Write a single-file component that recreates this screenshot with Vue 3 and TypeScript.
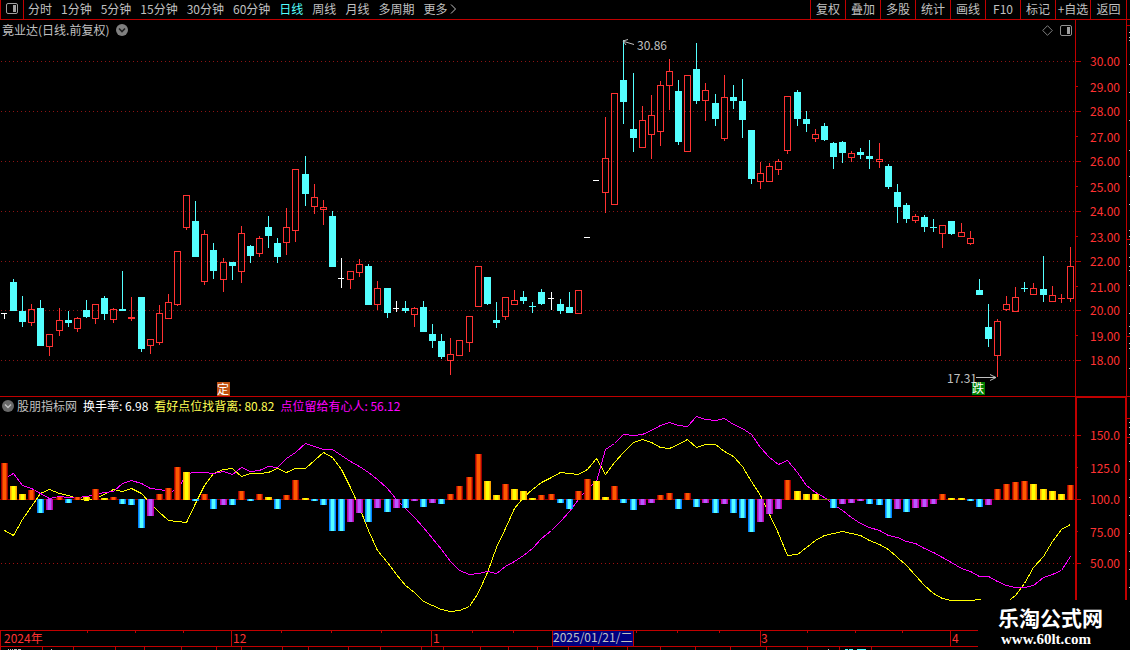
<script setup lang="ts">
import { computed, onBeforeUnmount, onMounted, ref } from 'vue'

type Tone = 'r' | 'c' | 'w'
type Candle = [Tone, number, number, number, number]

const periods = ['分时', '1分钟', '5分钟', '15分钟', '30分钟', '60分钟', '日线', '周线', '月线', '多周期']
const tools = ['复权', '叠加', '多股', '统计', '画线', 'F10', '标记', '+自选', '返回']
const activePeriod = ref('日线')

const plot = ref<HTMLElement | null>(null)
const width = ref(1075)
const measure = () => {
  if (plot.value) width.value = plot.value.clientWidth
}
onMounted(() => {
  measure()
  window.addEventListener('resize', measure)
})
onBeforeUnmount(() => window.removeEventListener('resize', measure))

// tone, high, body top, body bottom, low
const candles: Candle[] = [
  ['w', 313, 313, 314, 319], ['c', 279, 282, 311, 311], ['c', 296, 311, 322, 327], ['r', 304, 309, 323, 326],
  ['c', 300, 308, 346, 346], ['r', 334, 334, 347, 356], ['r', 308, 320, 331, 336], ['c', 311, 320, 323, 327],
  ['r', 317, 318, 329, 332], ['c', 300, 310, 317, 318], ['r', 304, 304, 319, 324], ['c', 296, 298, 314, 320],
  ['r', 308, 309, 320, 323], ['c', 271, 309, 311, 311], ['r', 297, 317, 319, 321], ['c', 297, 297, 349, 352],
  ['r', 339, 339, 346, 354], ['r', 305, 313, 343, 345], ['r', 294, 302, 319, 319], ['r', 251, 251, 305, 306],
  ['r', 195, 195, 228, 230], ['c', 201, 221, 257, 257], ['r', 230, 234, 282, 285], ['c', 243, 250, 271, 279],
  ['r', 258, 262, 280, 292], ['c', 262, 262, 266, 280], ['r', 226, 233, 272, 283], ['c', 245, 246, 256, 263],
  ['r', 236, 238, 254, 257], ['c', 216, 227, 236, 248], ['c', 238, 243, 257, 263], ['r', 208, 227, 243, 255],
  ['r', 169, 169, 231, 242], ['c', 156, 174, 194, 206], ['r', 184, 197, 207, 214], ['r', 200, 207, 210, 225],
  ['c', 211, 216, 267, 267], ['w', 258, 278, 279, 288], ['r', 271, 271, 280, 289], ['r', 259, 264, 273, 277],
  ['c', 264, 266, 305, 305], ['r', 281, 288, 305, 310], ['c', 288, 288, 313, 318], ['w', 301, 308, 309, 312],
  ['c', 301, 308, 311, 313], ['r', 307, 308, 315, 327], ['c', 301, 307, 332, 332], ['c', 324, 334, 341, 348],
  ['c', 334, 341, 357, 359], ['r', 338, 354, 361, 375], ['r', 340, 340, 356, 356], ['r', 316, 316, 343, 352],
  ['r', 266, 266, 307, 307], ['c', 277, 277, 304, 305], ['c', 302, 320, 323, 328], ['r', 297, 297, 317, 320],
  ['r', 290, 300, 305, 305], ['c', 291, 297, 301, 304], ['c', 302, 306, 307, 313], ['c', 289, 292, 304, 305],
  ['w', 292, 298, 299, 310], ['c', 299, 304, 311, 314], ['c', 292, 307, 313, 313], ['r', 290, 290, 314, 314],
  ['w', 237, 237, 238, 238], ['w', 180, 180, 181, 181], ['r', 117, 158, 193, 213], ['r', 93, 93, 205, 205],
  ['c', 40, 80, 102, 124], ['c', 73, 129, 138, 152], ['r', 106, 120, 148, 148], ['r', 95, 115, 135, 159],
  ['r', 81, 85, 132, 146], ['r', 59, 71, 86, 110], ['c', 80, 91, 142, 145], ['r', 75, 75, 152, 152],
  ['c', 43, 69, 101, 104], ['r', 83, 90, 101, 121], ['c', 94, 103, 119, 126], ['r', 75, 97, 139, 141],
  ['c', 85, 97, 101, 109], ['c', 79, 101, 120, 138], ['c', 130, 130, 179, 184], ['r', 162, 173, 182, 189],
  ['r', 163, 166, 182, 182], ['r', 159, 161, 170, 175], ['r', 96, 96, 151, 154], ['c', 90, 92, 119, 126],
  ['c', 111, 119, 124, 132], ['r', 129, 134, 139, 142], ['c', 123, 126, 140, 141], ['c', 142, 143, 157, 169],
  ['c', 141, 142, 153, 163], ['r', 151, 153, 158, 162], ['c', 148, 152, 155, 159], ['c', 140, 156, 159, 169],
  ['r', 143, 159, 162, 168], ['c', 164, 166, 187, 189], ['c', 184, 192, 207, 223], ['c', 203, 205, 219, 223],
  ['r', 214, 216, 221, 223], ['c', 215, 217, 227, 232], ['c', 219, 227, 228, 232], ['r', 225, 225, 234, 248],
  ['c', 221, 221, 234, 235], ['r', 223, 232, 237, 237], ['r', 231, 238, 244, 245], ['c', 279, 290, 295, 295],
  ['c', 304, 327, 339, 347], ['r', 319, 321, 356, 377], ['r', 296, 304, 310, 311], ['r', 287, 297, 312, 312],
  ['c', 282, 288, 289, 292], ['r', 283, 288, 295, 295], ['c', 256, 289, 295, 302], ['r', 286, 295, 302, 302],
  ['r', 294, 298, 299, 303], ['r', 247, 266, 299, 302],
]

// one letter per bar, ten bars per group
const barTones = [
  'oyyocmocoy', 'oyocccmooo', 'ycocmcocoy', 'cooyccccmm', 'cmcmcmcmco', 'oooyyoyyyo',
  'occooyyocc', 'mmoococmcm', 'cccmmmoyyy', 'ycmmmcccmc', 'mmmoyyccmo', 'oooyyyyo',
].join('')

const barEnds = [
  463, 486, 494, 490, 513, 510, 497, 503, 497, 497, 489, 498, 497, 504, 505, 528, 516, 494, 488, 467,
  472, 501, 494, 509, 505, 505, 491, 501, 494, 497, 509, 495, 480, 498, 501, 505, 531, 531, 522, 513,
  522, 508, 512, 508, 508, 501, 507, 503, 504, 494, 486, 477, 454, 481, 495, 484, 489, 491, 498, 495,
  494, 503, 509, 491, 479, 481, 497, 486, 503, 510, 505, 503, 495, 493, 509, 493, 507, 503, 513, 504,
  513, 518, 532, 522, 514, 509, 480, 491, 494, 494, 499, 508, 504, 503, 501, 504, 505, 518, 509, 512,
  508, 507, 504, 494, 498, 498, 501, 507, 505, 489, 484, 482, 481, 484, 489, 491, 494, 485,
]

const holders = [
  478, 473, 485, 488, 493, 498, 496, 497, 497, 496, 494, 492, 491, 483, 480, 483, 488, 489, 491, 490,
  473, 472, 472, 473, 471, 474, 467, 471, 470, 466, 467, 458, 452, 443, 446, 449, 449, 455, 461, 466,
  472, 479, 488, 499, 508, 517, 527, 538, 549, 561, 570, 574, 573, 571, 573, 566, 561, 555, 548, 538,
  530, 521, 511, 499, 488, 481, 449, 443, 434, 435, 434, 430, 425, 422, 425, 426, 416, 419, 420, 418,
  424, 428, 434, 447, 457, 464, 460, 472, 485, 492, 497, 504, 510, 517, 523, 527, 530, 535, 537, 541,
  543, 548, 552, 557, 562, 568, 571, 576, 576, 581, 585, 587, 587, 585, 577, 574, 570, 556,
]

const divergence = [
  530, 535, 519, 506, 493, 489, 493, 495, 498, 500, 498, 494, 489, 491, 488, 493, 503, 512, 520, 521,
  522, 503, 485, 473, 469, 468, 476, 473, 473, 472, 468, 472, 468, 468, 460, 452, 457, 469, 487, 507,
  530, 550, 562, 574, 585, 592, 601, 605, 609, 611, 610, 606, 592, 572, 547, 528, 508, 497, 489, 482,
  477, 472, 473, 474, 469, 458, 474, 462, 452, 442, 439, 442, 447, 448, 444, 439, 447, 444, 444, 451,
  456, 466, 481, 495, 514, 533, 555, 554, 547, 540, 535, 533, 531, 533, 535, 540, 544, 549, 557, 565,
  575, 585, 593, 598, 600, 600, 600, 599, 603, 604, 602, 595, 583, 567, 556, 541, 529, 524,
]

const palette: Record<Tone, string> = { r: '#ff3232', c: '#54ffff', w: '#ffffff' }
const step = computed(() => (width.value - 9) / (candles.length - 1))
const cx = (i: number) => Math.floor(4.4 + i * step.value)

const bars = computed(() =>
  barEnds
    .map((end, i) => {
      const down = end > 499
      return { x: cx(i) - 3, y: down ? 499 : end, h: down ? end - 499 : 500 - end, tone: barTones[i], flat: end === 499 }
    })
    .filter((b) => !b.flat),
)
const line = (values: number[]) => values.map((y, i) => `${cx(i) + 0.5},${y + 0.5}`).join(' ')

const priceGrid = [61, 111, 161, 211, 261, 310, 360]
const priceLabels = [62, 88, 112, 138, 162, 188, 212, 238, 262, 288, 311, 337, 361].map((y, i) => ({
  y,
  text: (30 - i).toFixed(2),
}))
const priceMinor = [86, 136, 186, 236, 286, 335]
const subLabels = [
  { y: 436, text: '150.0' },
  { y: 469, text: '125.0' },
  { y: 500, text: '100.0' },
  { y: 533, text: '75.00' },
  { y: 564, text: '50.00' },
]
const at = (x: number) => Math.round((x * width.value) / 1075)
const monthLines = [231, 431, 760, 950]
const weekTicks = [87, 135, 183, 281, 331, 381, 472, 513, 636, 677, 719, 807, 855, 902]
const footTicks = [
  0, 42, 73, 115, 144, 181, 216, 241, 282, 308, 348, 380, 421, 443, 480, 508, 537, 568, 593, 627, 660, 695, 730,
  766, 807, 839, 871,
]
const footMarks = [
  [8, 1], [10, 1], [12, 1], [14, 3], [18, 3], [51, 1], [828, 1],
]
const edgeMarks = [32, 37, 40, 64, 92, 120, 150, 176, 204, 230, 236, 244, 257, 266, 270, 285, 313, 326, 333, 343, 348, 368]
const subEdgeMarks = [422, 427, 434, 443, 461, 479, 497, 515, 533, 551, 569, 587]
</script>

<template>
  <main class="terminal">
    <header class="topbar">
      <button class="layout-btn" aria-label="布局">
        <svg width="12" height="11" viewBox="0 0 12 11">
          <rect x="0.5" y="0.5" width="11" height="10" rx="1.5" fill="none" stroke="#a0a0a0" />
          <rect x="7" y="2" width="3" height="7" fill="#a0a0a0" />
        </svg>
      </button>
      <nav class="periods">
        <button
          v-for="p in periods"
          :key="p"
          :class="{ active: p === activePeriod }"
          @click="activePeriod = p"
        >{{ p }}</button>
        <button class="more">
          更多<svg width="7" height="10" viewBox="0 0 7 10"><path d="M1 0.5L5.5 5L1 9.5" fill="none" stroke="#c0c0c0" /></svg>
        </button>
      </nav>
      <div class="tools">
        <button v-for="t in tools" :key="t">{{ t }}</button>
      </div>
    </header>

    <section class="panel main-panel">
      <div ref="plot" class="plot">
        <div class="title-row">
          <h1>竟业达(日线.前复权)</h1>
          <button class="round" aria-label="展开">
            <svg width="12" height="12" viewBox="0 0 12 12">
              <circle cx="6" cy="6" r="6" fill="#808080" />
              <path d="M3 4.5L6 7.5L9 4.5" fill="none" stroke="#202020" stroke-width="1.6" />
            </svg>
          </button>
          <span class="grow"></span>
          <svg width="11" height="11" viewBox="0 0 11 11">
            <path d="M5.5 0.7L10.3 5.5L5.5 10.3L0.7 5.5Z" fill="none" stroke="#808080" />
          </svg>
          <svg width="12" height="11" viewBox="0 0 12 11">
            <rect x="0.5" y="0.5" width="11" height="10" rx="1.5" fill="none" stroke="#909090" />
            <rect x="7" y="2" width="3" height="7" fill="#a0a0a0" />
          </svg>
        </div>
        <svg class="canvas" :width="width" height="356" :viewBox="`0 40 ${width} 356`">
          <g shape-rendering="crispEdges">
            <line
              v-for="y in priceGrid"
              :key="y"
              x1="1"
              :x2="width"
              :y1="y + 0.5"
              :y2="y + 0.5"
              stroke="#8c1414"
              stroke-dasharray="1 3"
            />
            <g v-for="(k, i) in candles" :key="i" :fill="palette[k[0]]">
              <rect :x="cx(i)" :y="k[1]" width="1" :height="k[2] - k[1]" />
              <rect :x="cx(i)" :y="k[3]" width="1" :height="k[4] - k[3]" />
              <rect
                v-if="k[0] === 'r' && k[3] - k[2] > 1"
                :x="cx(i) - 2.5"
                :y="k[2] + 0.5"
                width="6"
                :height="k[3] - k[2] - 1"
                fill="none"
                :stroke="palette.r"
              />
              <rect v-else :x="cx(i) - 3" :y="k[2]" :width="k[0] === 'w' ? 6 : 7" :height="k[3] - k[2]" />
            </g>
            <rect :x="cx(24) - 6" y="382" width="13" height="14" fill="#c05010" />
            <rect :x="cx(107) - 7" y="382" width="13" height="13" fill="#008000" />
          </g>
          <g fill="none" stroke="#c0c0c0">
            <path :d="`M${cx(68) + 11} 44.5L${cx(68) + 1} 41.5M${cx(68) + 5} 39.5L${cx(68)} 41L${cx(68) + 3} 45`" />
            <path :d="`M${cx(109) - 21} 377.5H${cx(109) - 1}M${cx(109) - 7} 374.5L${cx(109) - 1} 377.5L${cx(109) - 7} 380.5`" />
          </g>
          <text class="note" :x="cx(68) + 14" y="50">30.86</text>
          <text class="note" :x="cx(109) - 50" y="383">17.31</text>
          <text class="badge" :x="cx(24) - 6" y="394">定</text>
          <text class="badge" :x="cx(107) - 7" y="393">跌</text>
        </svg>
      </div>
      <svg class="axis" width="55" height="376" viewBox="0 20 55 376">
        <g shape-rendering="crispEdges" fill="#c00000">
          <rect x="0" y="20" width="1" height="376" />
          <rect x="51" y="20" width="1" height="376" />
          <rect v-for="y in priceGrid" :key="y" x="0" :y="y" width="6" height="1" />
          <rect v-for="y in priceMinor" :key="y" x="0" :y="y" width="3" height="1" />
          <rect v-for="y in [25, 239, 336]" :key="y" x="51" :y="y" width="4" height="1" />
          <rect v-for="y in edgeMarks" :key="y" x="54" :y="y" width="1" height="1" fill="#c0c0c0" />
        </g>
        <text v-for="l in priceLabels" :key="l.y" x="15" :y="l.y + 4">{{ l.text }}</text>
      </svg>
    </section>

    <section class="panel sub-panel">
      <div class="plot">
        <div class="legend">
          <button class="round" aria-label="指标菜单">
            <svg width="12" height="12" viewBox="0 0 12 12">
              <circle cx="6" cy="6" r="6" fill="#686868" />
              <path d="M3 4.5L6 7.5L9 4.5" fill="none" stroke="#c0c0c0" stroke-width="1.4" />
            </svg>
          </button>
          <span class="source">股朋指标网</span>
          <span class="turnover">换手率: 6.98</span>
          <span class="diverge">看好点位找背离: 80.82</span>
          <span class="holder">点位留给有心人: 56.12</span>
        </div>
        <svg class="canvas" :width="width" height="216" :viewBox="`0 414 ${width} 216`" shape-rendering="crispEdges">
          <defs>
            <linearGradient v-for="g in [
              { id: 'o', a: '#a00000', b: '#d83000', c: '#ff5800' },
              { id: 'y', a: '#ffa800', b: '#ffd000', c: '#ffff00' },
              { id: 'c', a: '#0080ff', b: '#28b8ff', c: '#54ffff' },
              { id: 'm', a: '#c000a8', b: '#b828d0', c: '#b858ff' },
            ]" :id="`tone-${g.id}`" :key="g.id">
              <stop offset="14%" :stop-color="g.a" />
              <stop offset="14%" :stop-color="g.b" />
              <stop offset="29%" :stop-color="g.b" />
              <stop offset="29%" :stop-color="g.c" />
              <stop offset="71%" :stop-color="g.c" />
              <stop offset="71%" :stop-color="g.b" />
              <stop offset="86%" :stop-color="g.b" />
              <stop offset="86%" :stop-color="g.a" />
            </linearGradient>
          </defs>
          <line
            v-for="y in [435, 563]"
            :key="y"
            x1="1"
            :x2="width"
            :y1="y + 0.5"
            :y2="y + 0.5"
            stroke="#a01010"
            stroke-dasharray="1 3"
          />
          <rect x="0" y="499" :width="width" height="1" fill="#900000" />
          <polyline :points="line(divergence)" fill="none" stroke="#ffff00" />
          <polyline :points="line(holders)" fill="none" stroke="#ff00ff" />
          <rect :x="cx(90) - 9" y="499" width="19" height="1" fill="#808000" />
          <rect
            v-for="b in bars"
            :key="b.x"
            :x="b.x"
            :y="b.y"
            width="7"
            :height="b.h"
            :fill="`url(#tone-${b.tone})`"
          />
        </svg>
      </div>
      <svg class="axis" width="55" height="233" viewBox="0 397 55 233">
        <g shape-rendering="crispEdges" fill="#c00000">
          <rect x="0" y="397" width="2" height="233" />
          <rect x="50" y="397" width="2" height="233" />
          <rect x="0" y="397" width="52" height="1" />
          <rect v-for="y in [435, 499, 563]" :key="y" x="0" :y="y" width="6" height="1" />
          <rect v-for="y in [467, 531]" :key="y" x="0" :y="y" width="3" height="1" />
          <rect v-for="y in [418, 437]" :key="y" x="51" :y="y" width="4" height="1" />
          <rect v-for="y in subEdgeMarks" :key="y" x="54" :y="y" width="1" height="1" fill="#c0c0c0" />
        </g>
        <text v-for="l in subLabels" :key="l.y" x="15" :y="l.y + 4">{{ l.text }}</text>
      </svg>
    </section>

    <footer class="timeline">
      <svg width="100%" height="20">
        <g shape-rendering="crispEdges" fill="#c00000">
          <rect width="100%" height="1" />
          <rect y="16" width="100%" height="1" />
          <rect width="1" height="16" />
          <rect v-for="x in monthLines" :key="x" :x="at(x)" width="1" height="16" />
          <rect v-for="x in weekTicks" :key="x" :x="at(x)" y="1" width="1" height="2" />
          <rect v-for="x in footTicks" :key="x" :x="at(x)" y="17" width="1" height="3" />
          <rect v-for="m in footMarks" :key="m[0]" :x="at(m[0])" y="19" :width="m[1]" height="1" fill="#c0c0c0" />
          <rect :x="at(845)" y="19" width="3" height="1" fill="#54ffff" />
          <rect :x="at(849)" y="19" width="4" height="1" fill="#54ffff" />
          <rect :x="at(857)" y="19" width="9" height="1" fill="#54ffff" />
          <rect :x="at(552)" y="1" width="82" height="15" fill="#c00000" />
          <rect :x="at(552) + 1" y="1" width="80" height="15" fill="#000080" />
        </g>
        <text :x="at(4)" y="13">2024年</text>
        <text :x="at(233)" y="13">12</text>
        <text :x="at(433)" y="13">1</text>
        <text class="cursor-date" :x="at(553)" y="12">2025/01/21/二</text>
        <text :x="at(761)" y="13">3</text>
        <text :x="at(952)" y="13">4</text>
      </svg>
    </footer>

    <aside class="brand">
      <strong>乐淘公式网</strong>
      <a href="#">www.60lt.com</a>
    </aside>
  </main>
</template>

<style>
html,
body {
  background: #000;
}
</style>

<style scoped>
.terminal {
  position: relative;
  overflow: hidden;
  background: #000;
  color: #c0c0c0;
  font: 12px/16px 'Noto Sans CJK SC', sans-serif;
}
button {
  padding: 0;
  border: 0;
  background: none;
  color: inherit;
  font: inherit;
  white-space: nowrap;
  cursor: pointer;
}
svg {
  display: block;
  flex: none;
}
.topbar {
  display: flex;
  height: 19px;
  border-bottom: 1px solid #c00000;
}
.topbar button {
  padding-bottom: 2px;
}
.layout-btn {
  display: flex;
  align-items: center;
  justify-content: center;
  width: 24px;
  border: solid #c00000;
  border-width: 0 1px;
}
.periods {
  display: flex;
  flex: 1;
  gap: 9px;
  padding-left: 4px;
}
.periods .active {
  color: #54ffff;
}
.more {
  display: flex;
  align-items: center;
  gap: 3px;
}
.tools {
  display: flex;
  margin-right: 3px;
  border-right: 1px solid #c00000;
}
.tools button {
  width: 35px;
  border-left: 1px solid #c00000;
}
.tools button:last-child {
  width: 36px;
}
.panel {
  display: flex;
}
.plot {
  flex: 1;
  min-width: 0;
}
.canvas {
  overflow: visible;
}
.title-row {
  display: flex;
  align-items: center;
  gap: 7px;
  height: 20px;
  padding: 0 3px 0 2px;
}
h1 {
  margin: 0;
  font: inherit;
}
.grow {
  flex: 1;
}
.round {
  display: block;
  border-radius: 50%;
}
.sub-panel {
  border-top: 1px solid #c00000;
}
.legend {
  display: flex;
  align-items: center;
  gap: 6px;
  height: 17px;
  padding-left: 2px;
  line-height: 14px;
  white-space: nowrap;
}
.legend .source {
  margin-left: -3px;
}
.turnover {
  color: #fff;
}
.diverge {
  color: #ffff54;
}
.holder {
  color: #ff00ff;
}
text {
  font: 12px 'Noto Sans CJK SC', sans-serif;
  fill: #ff3232;
}
.note,
.cursor-date {
  fill: #c0c0c0;
}
.badge {
  fill: #fff;
}
.brand {
  position: absolute;
  right: 0;
  bottom: 0;
  box-sizing: border-box;
  width: 152px;
  height: 50px;
  padding: 4px 0 0 20px;
  background: #000;
  color: #fff;
}
.brand strong {
  display: block;
  font-size: 21px;
  line-height: 26px;
}
.brand a {
  display: block;
  padding-left: 3px;
  color: inherit;
  font: bold 15px/18px 'Liberation Serif', serif;
  text-decoration: none;
}
</style>
